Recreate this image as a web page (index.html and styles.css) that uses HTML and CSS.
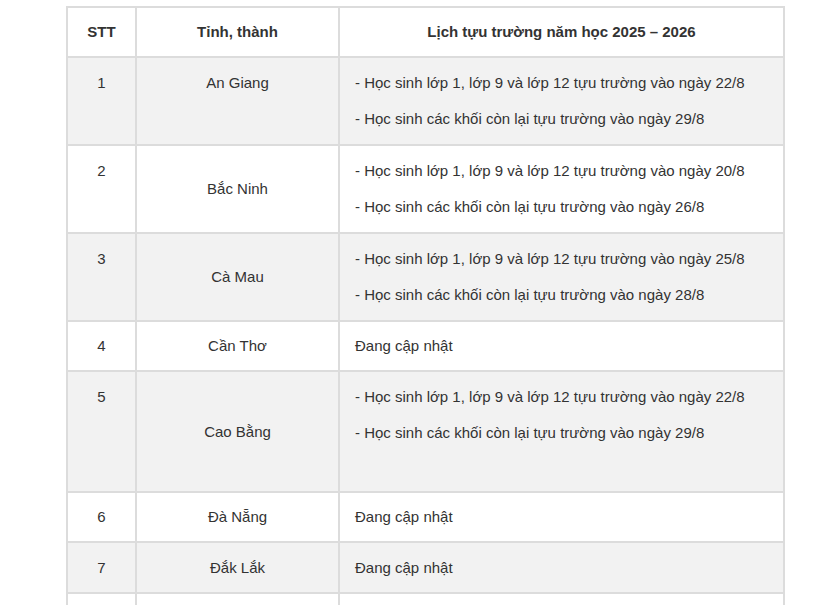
FILE: index.html
```html
<!DOCTYPE html>
<html lang="vi">
<head>
<meta charset="utf-8">
<title>Lịch tựu trường</title>
<link rel="stylesheet" href="styles.css">
</head>
<body>
<div class="page">
<table class="schedule">
  <colgroup>
    <col class="c-stt">
    <col class="c-prov">
    <col class="c-date">
  </colgroup>
  <thead>
    <tr class="head">
      <th>STT</th>
      <th>Tỉnh, thành</th>
      <th>Lịch tựu trường năm học 2025 – 2026</th>
    </tr>
  </thead>
  <tbody>
    <tr class="odd">
      <td class="num top"><p>1</p></td>
      <td class="prov top"><p>An Giang</p></td>
      <td class="info"><p>- Học sinh lớp 1, lớp 9 và lớp 12 tựu trường vào ngày 22/8</p><p>- Học sinh các khối còn lại tựu trường vào ngày 29/8</p></td>
    </tr>
    <tr>
      <td class="num top"><p>2</p></td>
      <td class="prov">Bắc Ninh</td>
      <td class="info"><p>- Học sinh lớp 1, lớp 9 và lớp 12 tựu trường vào ngày 20/8</p><p>- Học sinh các khối còn lại tựu trường vào ngày 26/8</p></td>
    </tr>
    <tr class="odd">
      <td class="num top"><p>3</p></td>
      <td class="prov">Cà Mau</td>
      <td class="info"><p>- Học sinh lớp 1, lớp 9 và lớp 12 tựu trường vào ngày 25/8</p><p>- Học sinh các khối còn lại tựu trường vào ngày 28/8</p></td>
    </tr>
    <tr class="single">
      <td class="num">4</td>
      <td class="prov">Cần Thơ</td>
      <td class="info">Đang cập nhật</td>
    </tr>
    <tr class="odd tall">
      <td class="num top"><p>5</p></td>
      <td class="prov">Cao Bằng</td>
      <td class="info top"><p>- Học sinh lớp 1, lớp 9 và lớp 12 tựu trường vào ngày 22/8</p><p>- Học sinh các khối còn lại tựu trường vào ngày 29/8</p></td>
    </tr>
    <tr class="single">
      <td class="num">6</td>
      <td class="prov">Đà Nẵng</td>
      <td class="info">Đang cập nhật</td>
    </tr>
    <tr class="odd single tall7">
      <td class="num">7</td>
      <td class="prov">Đắk Lắk</td>
      <td class="info">Đang cập nhật</td>
    </tr>
    <tr class="single">
      <td class="num"></td>
      <td class="prov"></td>
      <td class="info"></td>
    </tr>
  </tbody>
</table>
</div>
</body>
</html>
```

FILE: styles.css
```css
html, body {
  margin: 0;
  padding: 0;
  background: #ffffff;
}

.page {
  padding: 6px 0 0 66px;
  font-family: "Liberation Sans", Arial, sans-serif;
  font-size: 15px;
  color: #333333;
}

.schedule {
  border-collapse: collapse;
  width: 717px;
  table-layout: fixed;
}

.c-stt { width: 69px; }
.c-prov { width: 203px; }
.c-date { width: 445px; }

.schedule th,
.schedule td {
  border: 2px solid #dcdcdc;
  padding: 0 15px;
  line-height: 22px;
  vertical-align: middle;
}

.schedule th {
  height: 48px;
  font-weight: bold;
  text-align: center;
}

.schedule td.num,
.schedule td.prov {
  text-align: center;
}

.schedule td.info {
  text-align: left;
}

.schedule td.top {
  vertical-align: top;
}

.schedule p {
  margin: 14px 0;
}

.schedule tr.odd td {
  background: #f2f2f2;
}

.schedule tr.single td {
  height: 48px;
}

.schedule tr.tall7 td {
  height: 49px;
}

.schedule tr.tall td.info {
  height: 87px;
  padding-bottom: 32px;
}
```
